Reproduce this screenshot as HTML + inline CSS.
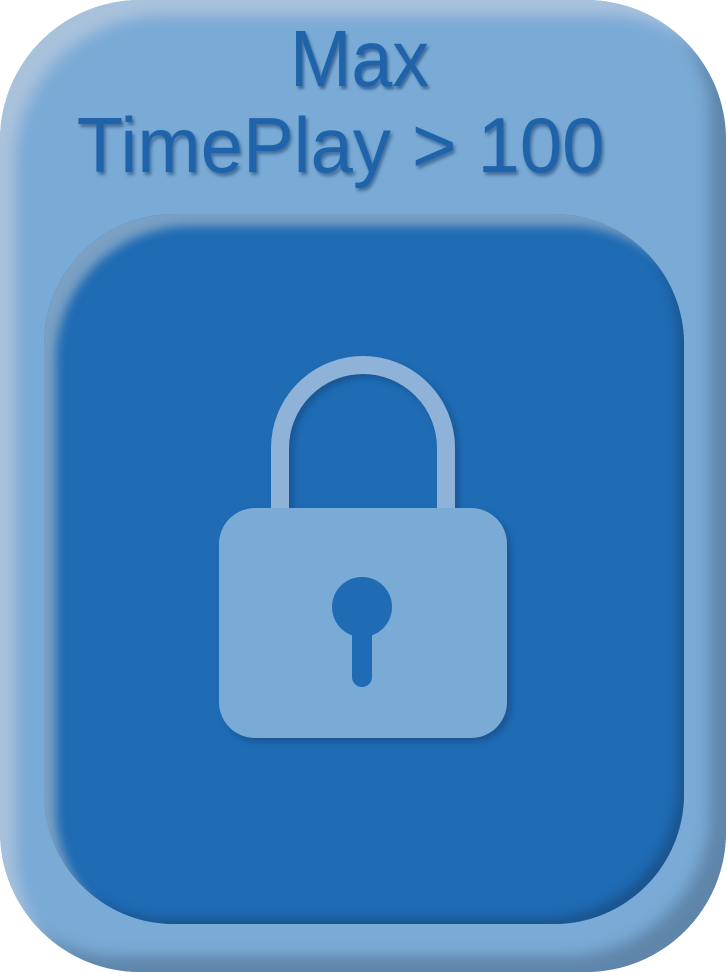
<!DOCTYPE html>
<html><head><style>
html,body{margin:0;padding:0;background:#fff;}
body{width:726px;height:972px;position:relative;overflow:hidden;font-family:"Liberation Sans",sans-serif;}
.outer{position:absolute;left:0;top:0;width:726px;height:972px;border-radius:140px;background:#7aaad6;
box-shadow:inset 22px 22px 14px -6px #a9c2dc, inset -22px -22px 14px -6px #5f86aa;}
.inner{position:absolute;left:44px;top:214px;width:640px;height:710px;border-radius:130px;background:#1f6bb4;
box-shadow:inset 16px 16px 10px -4px #7aa0c4, inset -10px -10px 10px -4px #1a5590;}
.t{position:absolute;left:0;width:726px;text-align:center;color:#1f64aa;text-shadow:2px 3px 3px rgba(20,60,110,.55);white-space:nowrap;}
.t1{top:14px;font-size:80px;line-height:90px;}
.t2{top:100px;font-size:78px;line-height:90px;}
.t span{display:inline-block;transform-origin:center;}
</style></head><body>
<div class="outer"></div>
<div class="t t1" style="left:-3px"><span style="transform:scaleX(0.92)">Max</span></div>
<div class="t t2" style="left:-22px"><span style="transform:scaleX(0.975)">TimePlay &gt; 100</span></div>
<div class="inner"></div>
<svg style="position:absolute;left:0;top:0" width="726" height="972">
<defs>
<filter id="sh" x="-20%" y="-20%" width="140%" height="140%">
<feDropShadow dx="4" dy="4" stdDeviation="3" flood-color="#154a80" flood-opacity="0.6"/>
</filter>
</defs>
<g filter="url(#sh)">
<path d="M280 510 V448 A83 83 0 0 1 446 448 V510" fill="none" stroke="#8fb3d8" stroke-width="18"/>
<rect x="219" y="508" width="288" height="230" rx="36" fill="#7aaad6"/>
</g>
<circle cx="362" cy="607" r="30" fill="#1f6bb4"/>
<rect x="352" y="620" width="20" height="67" rx="10" fill="#1f6bb4"/>
</svg>
</body></html>
